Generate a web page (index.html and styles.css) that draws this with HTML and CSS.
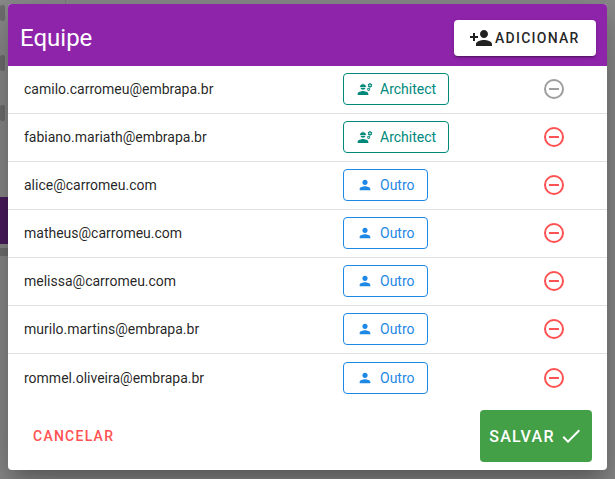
FILE: index.html
```html
<!DOCTYPE html>
<html lang="en">
<head>
  <meta charset="UTF-8">
  <meta name="viewport" content="width=device-width, initial-scale=1.0">
  <title>Equipe</title>
  <link rel="stylesheet" href="styles.css">
</head>

<body>
  <div class="backdrop">
    <div class="side">
      <span class="dots"></span>
      <span class="dots"></span>
      <span class="dots"></span>
      <span class="band"></span>
      <span class="strip"></span>
    </div>
    <div class="rule"></div>
  </div>

  <div class="dialog">
    <header class="dialog-head">
      <h1>Equipe</h1>
      <button class="add-btn">
        <svg viewBox="0 0 24 24" class="add-icon"><path d="M15 12c2.21 0 4-1.79 4-4s-1.79-4-4-4-4 1.79-4 4 1.79 4 4 4zm-9-2V7H4v3H1v2h3v3h2v-3h3v-2H6zm9 4c-2.67 0-8 1.34-8 4v2h16v-2c0-2.66-5.33-4-8-4z"/></svg>
        Adicionar
      </button>
    </header>

    <div class="rows">
      <div class="row">
        <span class="email">camilo.carromeu@embrapa.br</span>
        <span class="role-cell"><span class="role architect"><svg viewBox="0 0 24 24"><use href="#engineer"/></svg>Architect</span></span>
        <span class="action"><svg viewBox="0 0 24 24" class="off"><use href="#minus"/></svg></span>
      </div>
      <div class="row">
        <span class="email">fabiano.mariath@embrapa.br</span>
        <span class="role-cell"><span class="role architect"><svg viewBox="0 0 24 24"><use href="#engineer"/></svg>Architect</span></span>
        <span class="action"><svg viewBox="0 0 24 24"><use href="#minus"/></svg></span>
      </div>
      <div class="row">
        <span class="email">alice@carromeu.com</span>
        <span class="role-cell"><span class="role other"><svg viewBox="0 0 24 24"><use href="#person"/></svg>Outro</span></span>
        <span class="action"><svg viewBox="0 0 24 24"><use href="#minus"/></svg></span>
      </div>
      <div class="row">
        <span class="email">matheus@carromeu.com</span>
        <span class="role-cell"><span class="role other"><svg viewBox="0 0 24 24"><use href="#person"/></svg>Outro</span></span>
        <span class="action"><svg viewBox="0 0 24 24"><use href="#minus"/></svg></span>
      </div>
      <div class="row">
        <span class="email">melissa@carromeu.com</span>
        <span class="role-cell"><span class="role other"><svg viewBox="0 0 24 24"><use href="#person"/></svg>Outro</span></span>
        <span class="action"><svg viewBox="0 0 24 24"><use href="#minus"/></svg></span>
      </div>
      <div class="row">
        <span class="email">murilo.martins@embrapa.br</span>
        <span class="role-cell"><span class="role other"><svg viewBox="0 0 24 24"><use href="#person"/></svg>Outro</span></span>
        <span class="action"><svg viewBox="0 0 24 24"><use href="#minus"/></svg></span>
      </div>
      <div class="row">
        <span class="email">rommel.oliveira@embrapa.br</span>
        <span class="role-cell"><span class="role other"><svg viewBox="0 0 24 24"><use href="#person"/></svg>Outro</span></span>
        <span class="action"><svg viewBox="0 0 24 24"><use href="#minus"/></svg></span>
      </div>
    </div>

    <footer class="dialog-foot">
      <button class="cancel-btn">Cancelar</button>
      <button class="save-btn">
        Salvar
        <svg viewBox="0 0 24 24"><path d="M21 7L9 19l-5.5-5.5 1.41-1.41L9 16.17 19.59 5.59 21 7z"/></svg>
      </button>
    </footer>
  </div>

  <svg class="defs" aria-hidden="true">
    <symbol id="minus" viewBox="0 0 24 24">
      <path d="M7,13V11H17V13H7M12,2A10,10 0 0,1 22,12A10,10 0 0,1 12,22A10,10 0 0,1 2,12A10,10 0 0,1 12,2M12,4A8,8 0 0,0 4,12A8,8 0 0,0 12,20A8,8 0 0,0 20,12A8,8 0 0,0 12,4Z"/>
    </symbol>
    <symbol id="person" viewBox="0 0 24 24">
      <path d="M12 12c2.21 0 4-1.79 4-4s-1.79-4-4-4-4 1.79-4 4 1.79 4 4 4zm0 2c-2.67 0-8 1.34-8 4v2h16v-2c0-2.66-5.33-4-8-4z"/>
    </symbol>
    <symbol id="engineer" viewBox="0 0 24 24">
      <path d="M9,15c-2.67,0-8,1.34-8,4v2h16v-2C17,16.34,11.67,15,9,15z M22.1,6.84c0.01-0.11,0.02-0.22,0.02-0.34c0-0.12-0.01-0.23-0.03-0.34 l0.74-0.58c0.07-0.05,0.08-0.15,0.04-0.22l-0.7-1.21c-0.04-0.08-0.14-0.1-0.21-0.08L21.1,4.42c-0.18-0.14-0.38-0.25-0.59-0.34 l-0.13-0.93C20.36,3.06,20.29,3,20.2,3h-1.4c-0.09,0-0.16,0.06-0.17,0.15L18.5,4.08c-0.21,0.09-0.41,0.21-0.59,0.34l-0.87-0.35 c-0.08-0.03-0.17,0-0.21,0.08l-0.7,1.21c-0.04,0.08-0.03,0.17,0.04,0.22l0.74,0.58c-0.02,0.11-0.03,0.23-0.03,0.34 c0,0.11,0.01,0.23,0.03,0.34l-0.74,0.58c-0.07,0.05-0.08,0.15-0.04,0.22l0.7,1.21c0.04,0.08,0.14,0.1,0.21,0.08l0.87-0.35 c0.18,0.14,0.38,0.25,0.59,0.34l0.13,0.93C18.64,9.94,18.71,10,18.8,10h1.4c0.09,0,0.16-0.06,0.17-0.15l0.13-0.93 c0.21-0.09,0.41-0.21,0.59-0.34l0.87,0.35c0.08,0.03,0.17,0,0.21-0.08l0.7-1.21c0.04-0.08,0.03-0.17-0.04-0.22L22.1,6.84z M19.5,7.75c-0.69,0-1.25-0.56-1.25-1.25s0.56-1.25,1.25-1.25s1.25,0.56,1.25,1.25S20.19,7.75,19.5,7.75z M19.92,11.68l-0.5-0.87 c-0.03-0.06-0.1-0.08-0.15-0.06l-0.62,0.25c-0.13-0.1-0.27-0.18-0.42-0.24l-0.09-0.66C18.12,10.04,18.06,10,18,10h-1 c-0.06,0-0.11,0.04-0.12,0.11l-0.09,0.66c-0.15,0.06-0.29,0.15-0.42,0.24l-0.62-0.25c-0.06-0.02-0.12,0-0.15,0.06l-0.5,0.87 c-0.03,0.06-0.02,0.12,0.03,0.16l0.53,0.41c-0.01,0.08-0.02,0.16-0.02,0.24c0,0.08,0.01,0.17,0.02,0.24l-0.53,0.41 c-0.05,0.04-0.06,0.11-0.03,0.16l0.5,0.87c0.03,0.06,0.1,0.08,0.15,0.06l0.62-0.25c0.13,0.1,0.27,0.18,0.42,0.24l0.09,0.66 C16.89,14.96,16.94,15,17,15h1c0.06,0,0.12-0.04,0.12-0.11l0.09-0.66c0.15-0.06,0.29-0.15,0.42-0.24l0.62,0.25 c0.06,0.02,0.12,0,0.15-0.06l0.5-0.87c0.03-0.06,0.02-0.12-0.03-0.16l-0.52-0.41c0.01-0.08,0.02-0.16,0.02-0.24 c0-0.08-0.01-0.17-0.02-0.24l0.53-0.41C19.95,11.81,19.96,11.74,19.92,11.68z M17.5,13.33c-0.46,0-0.83-0.38-0.83-0.83 c0-0.46,0.38-0.83,0.83-0.83s0.83,0.38,0.83,0.83C18.33,12.96,17.96,13.33,17.5,13.33z M4.74,9h8.53c0.27,0,0.49-0.22,0.49-0.49 V8.49c0-0.27-0.22-0.49-0.49-0.49H13c0-1.48-0.81-2.75-2-3.45V5.5C11,5.78,10.78,6,10.5,6S10,5.78,10,5.5V4.14 C9.68,4.06,9.35,4,9,4S8.32,4.06,8,4.14V5.5C8,5.78,7.78,6,7.5,6S7,5.78,7,5.5V4.55C5.81,5.25,5,6.52,5,8H4.74 C4.47,8,4.25,8.22,4.25,8.49v0.03C4.25,8.78,4.47,9,4.74,9z M9,13c1.86,0,3.41-1.28,3.86-3H5.14C5.59,11.72,7.14,13,9,13z"/>
    </symbol>
  </svg>
</body>
</html>
```

FILE: styles.css
```css
* {
  margin: 0;
  padding: 0;
  box-sizing: border-box;
}

body {
  font-family: Roboto, sans-serif;
  background-color: #8a8a8a;
  height: 100vh;
  overflow: hidden;
}

button {
  font-family: inherit;
  border: none;
  background: none;
  cursor: pointer;
}

.defs {
  display: none;
}

.backdrop {
  display: flex;
  height: 100%;
}

.side {
  width: 8px;
  display: flex;
  flex-direction: column;
  align-items: flex-start;
  padding-top: 5px;
}

.dots {
  width: 5px;
  height: 16px;
  margin-bottom: 34px;
  background-color: #6f6f6f;
  border-radius: 2px;
}

.band {
  width: 8px;
  height: 47px;
  margin-top: 42px;
  background-color: #4b1c5e;
}

.strip {
  width: 8px;
  height: 8px;
  margin-top: 4px;
  background-color: #6f6f6f;
}

.rule {
  width: 1px;
  height: 4px;
  margin-left: 57px;
  background-color: #7d7d7d;
}

.dialog {
  position: absolute;
  top: 4px;
  left: 8px;
  width: 599px;
  height: 466px;
  background-color: #fff;
  border-radius: 4px;
  overflow: hidden;
  box-shadow: 0 11px 15px -7px rgba(0, 0, 0, 0.2), 0 24px 38px 3px rgba(0, 0, 0, 0.14), 0 9px 46px 8px rgba(0, 0, 0, 0.12);
}

.dialog-head {
  height: 62px;
  background-color: #8e24aa;
  padding: 6px 11px 0 12px;
  display: flex;
  align-items: center;
  justify-content: space-between;
}

.dialog-head h1 {
  font-size: 24px;
  font-weight: 400;
  color: #fff;
}

.add-btn {
  width: 142px;
  height: 36px;
  padding-left: 15px;
  background-color: #fff;
  border-radius: 4px;
  color: rgba(0, 0, 0, 0.87);
  font-size: 14px;
  font-weight: 500;
  letter-spacing: 1.25px;
  text-transform: uppercase;
  display: flex;
  align-items: center;
  gap: 2px;
  box-shadow: 0 3px 1px -2px rgba(0, 0, 0, 0.2), 0 2px 2px 0 rgba(0, 0, 0, 0.14), 0 1px 5px 0 rgba(0, 0, 0, 0.12);
}

.add-icon {
  width: 24px;
  height: 24px;
  fill: #212121;
}

.row {
  height: 48px;
  padding: 0 16px 1px;
  display: grid;
  grid-template-columns: 319px 168px 1fr;
  align-items: center;
  border-bottom: 1px solid #e0e0e0;
  font-size: 14px;
  color: rgba(0, 0, 0, 0.87);
}

.row:last-child {
  padding-bottom: 0;
  border-bottom: none;
}

.role-cell {
  display: flex;
}

.role {
  height: 32px;
  padding: 0 12px 0 13px;
  border: 1px solid currentColor;
  border-radius: 4px;
  display: flex;
  align-items: center;
  gap: 7px;
  font-size: 14px;
}

.role svg {
  width: 16px;
  height: 16px;
  fill: currentColor;
}

.architect {
  color: #00897b;
}

.other {
  color: #1e88e5;
}

.action {
  display: flex;
  width: 24px;
  fill: #ff5252;
  justify-self: start;
  margin-left: 31px;
}

.action svg {
  width: 24px;
  height: 24px;
}

.action .off {
  fill: #9e9e9e;
}

.dialog-foot {
  height: 68px;
  padding: 8px 15px 8px 25px;
  display: flex;
  align-items: center;
  justify-content: space-between;
}

.cancel-btn {
  color: #ff5252;
  font-size: 14px;
  font-weight: 500;
  letter-spacing: 1.25px;
  text-transform: uppercase;
}

.save-btn {
  width: 112px;
  height: 52px;
  background-color: #43a047;
  border-radius: 4px;
  color: #fff;
  font-size: 16px;
  font-weight: 500;
  letter-spacing: 1.25px;
  text-transform: uppercase;
  display: flex;
  align-items: center;
  justify-content: center;
  gap: 4px;
}

.save-btn svg {
  width: 24px;
  height: 24px;
  fill: #fff;
}
```
